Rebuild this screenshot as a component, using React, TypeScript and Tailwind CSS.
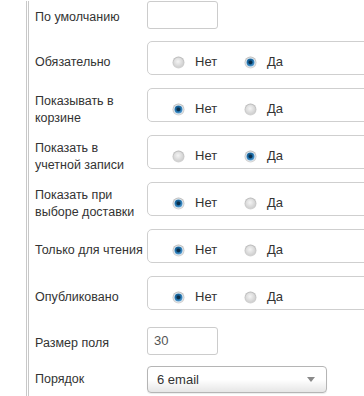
import type { ReactNode } from "react";

// --- radio drawing (old-style grey / blue glossy radio) ---
function Radio({ checked }: { checked: boolean }) {
  return (
    <svg width="13" height="13" viewBox="0 0 13 13" className="shrink-0">
      <defs>
        <linearGradient id="ring" x1="0" y1="0" x2="0" y2="1">
          <stop offset="0" stopColor="#b9b9b9" />
          <stop offset="1" stopColor="#d6d6d6" />
        </linearGradient>
        <radialGradient id="off" cx="0.45" cy="0.4" r="0.6">
          <stop offset="0" stopColor="#f4f4f4" />
          <stop offset="1" stopColor="#cfcfcf" />
        </radialGradient>
        <radialGradient id="on" cx="0.45" cy="0.4" r="0.6">
          <stop offset="0" stopColor="#0d3a5c" />
          <stop offset="0.55" stopColor="#1b6aa3" />
          <stop offset="1" stopColor="#5aa0d4" />
        </radialGradient>
      </defs>
      <circle cx="6.5" cy="6.5" r="6" fill="url(#ring)" />
      <circle cx="6.5" cy="6.5" r="5" fill={checked ? "#e9eef2" : "url(#off)"} />
      {checked && <circle cx="6.5" cy="6.5" r="4" fill="url(#on)" />}
      {checked && <circle cx="6.5" cy="6.5" r="1.8" fill="#0a2e4a" />}
    </svg>
  );
}

function YesNo({ value }: { value: boolean }) {
  return (
    <div className="h-[34px] w-[240px] shrink-0 rounded-[5px] border border-[#cfcfcf] bg-white pt-[12px] pl-[24px]">
      <div className="flex h-[16px] items-center text-[13px]">
        <Radio checked={!value} />
        <span className="ml-[10px] w-[49px]">Нет</span>
        <Radio checked={value} />
        <span className="ml-[10px]">Да</span>
      </div>
    </div>
  );
}

// label is centred on the control plus its bottom spacing
function Row({ label, children, className, pad }: { label: ReactNode; children: ReactNode; className?: string; pad?: string }) {
  return (
    <div className={"flex items-center " + (className ?? "")}>
      <div className="w-[112px] shrink-0 whitespace-nowrap text-[12.5px] leading-[17px]">{label}</div>
      <div className={"shrink-0 " + (pad ?? "")}>{children}</div>
    </div>
  );
}

const flags = [
  { label: "Обязательно", value: true },
  { label: <>Показывать в<br />корзине</>, value: false },
  { label: <>Показать в<br />учетной записи</>, value: true },
  { label: <>Показать при<br />выборе доставки</>, value: false },
  { label: "Только для чтения", value: false },
  { label: "Опубликовано", value: false },
];

export default function App() {
  return (
    <div className="h-[396px] w-[364px] overflow-hidden bg-white font-['Liberation_Sans',Arial,sans-serif] text-[13px] text-[#333]">
      <div className="ml-[26px] h-full border-l-[3px] border-double border-[#c8c8c8] pl-[6px]">
        {/* default value */}
        <Row label="По умолчанию" className="mt-[1px]" pad="pb-[5px]">
          <div className="h-[28px] w-[71px] rounded-[3px] border border-[#cccccc] bg-white" />
        </Row>

        {/* yes / no fields */}
        <div className="mt-[7px] flex flex-col gap-[4px]">
          {flags.map((f, i) => (
            <Row key={i} label={f.label} pad="pb-[9px]">
              <YesNo value={f.value} />
            </Row>
          ))}
        </div>

        <Row label="Размер поля" className="mt-[8px]" pad="pb-[4px]">
          <div className="flex h-[28px] w-[71px] items-center rounded-[3px] border border-[#cccccc] bg-white pl-[6px] text-[#555]">
            30
          </div>
        </Row>

        <Row label="Порядок" className="mt-[7px]">
          <div className="flex h-[27px] w-[180px] items-center justify-between rounded-[4px] border border-[#b5b5b5] bg-gradient-to-b from-white via-white to-[#e6e6e6] pl-[9px] pr-[11px] shadow-[0_1px_1px_rgba(0,0,0,0.08)]">
            <span>6 email</span>
            <svg width="8" height="5" viewBox="0 0 8 5">
              <path d="M0 0h8L4 5z" fill="#8a8a8a" />
            </svg>
          </div>
        </Row>
      </div>
    </div>
  );
}
